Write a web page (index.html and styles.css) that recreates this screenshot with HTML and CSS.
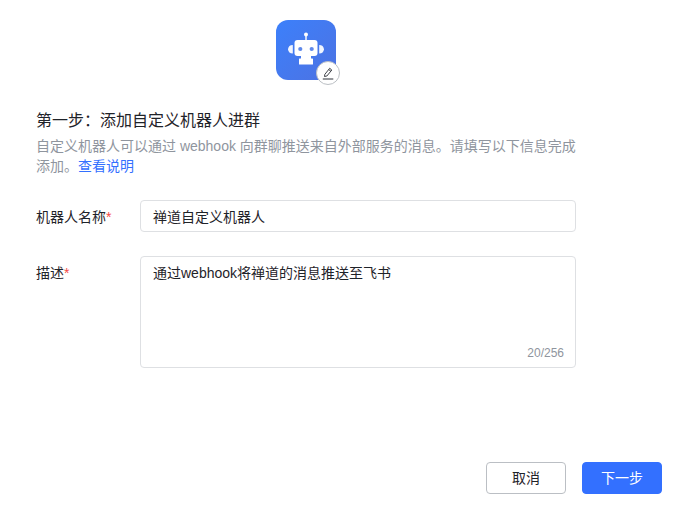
FILE: index.html
```html
<!DOCTYPE html>
<html lang="zh">
<head>
<meta charset="utf-8">
<title>添加自定义机器人</title>
<link rel="stylesheet" href="styles.css">
</head>
<body>
<div class="page">
  <div class="avatar-row">
    <div class="avatar">
      <svg class="robot" width="60" height="60" viewBox="0 0 60 60">
        <circle cx="30" cy="14.500" r="2" fill="#fff"/>
        <rect x="29.300" y="15" width="1.400" height="6" fill="#fff"/>
        <path d="M16.800 25v8.500a4.800 4.800 0 0 1-4.800-4.250a4.800 4.800 0 0 1 4.800-4.250z" fill="#f1f5fe"/>
        <path d="M43.200 25v8.500a4.800 4.800 0 0 0 4.800-4.250a4.800 4.800 0 0 0-4.800-4.250z" fill="#f1f5fe"/>
        <rect x="18.500" y="20" width="23" height="16" rx="3" fill="#fff"/>
        <circle cx="24.300" cy="29" r="2.100" fill="#5f88ea"/>
        <circle cx="35.700" cy="29" r="2.100" fill="#5f88ea"/>
        <rect x="25" y="35" width="10" height="5" fill="#fff"/>
        <rect x="23" y="38.500" width="14" height="6" rx="0.500" fill="#fff"/>
      </svg>
      <span class="edit">
        <svg width="14" height="14" viewBox="0 0 14 14" fill="none" stroke="#2b2f36" stroke-width="0.900">
          <path d="M3.800 8.400 8.700 2.300 10.800 4 5.900 10 3.500 10.500z"/>
          <path d="M7.700 3.500 9.800 5.200"/>
          <path d="M1.800 13h10.500" stroke-width="1"/>
        </svg>
      </span>
    </div>
  </div>
  <h1 class="title">第一步：添加自定义机器人进群</h1>
  <p class="desc">自定义机器人可以通过 webhook 向群聊推送来自外部服务的消息。请填写以下信息完成添加。<a class="link">查看说明</a></p>
  <div class="form">
    <div class="field">
      <label class="label">机器人名称<i class="req">*</i></label>
      <div class="input">禅道自定义机器人</div>
    </div>
    <div class="field">
      <label class="label">描述<i class="req">*</i></label>
      <div class="input textarea">通过webhook将禅道的消息推送至飞书<span class="count">20/256</span></div>
    </div>
  </div>
  <div class="actions">
    <button class="btn">取消</button>
    <button class="btn primary">下一步</button>
  </div>
</div>
</body>
</html>
```
FILE: styles.css
```css
* { box-sizing: border-box; }
html, body { margin: 0; padding: 0; background: #fff; }
body {
  font-family: "Liberation Sans", "Noto Sans CJK SC", sans-serif;
  font-size: 14px;
  color: #1f2329;
}
.page { width: 673px; height: 507px; padding: 20px 11px 13px 36px; display: flex; flex-direction: column; }
.avatar-row { width: 540px; display: flex; justify-content: center; }
.avatar {
  position: relative;
  width: 60px;
  height: 60px;
  border-radius: 12px;
  background: linear-gradient(135deg, #3c80fb, #4d72e2);
}
.robot { display: block; }
.edit {
  position: absolute;
  right: -4px;
  bottom: -5px;
  width: 24px;
  height: 24px;
  border-radius: 50%;
  background: #fff;
  border: 1px solid #bbbfc4;
  display: flex;
  align-items: center;
  justify-content: center;
}
.title { margin: 29px 0 0; font-size: 16px; font-weight: 400; line-height: 24px; color: #1f2329; }
.desc { margin: 3px 0 0; width: 540px; font-size: 14px; line-height: 20px; color: #8f959e; }
.link { color: #3370ff; }
.form { margin-top: 24px; display: flex; flex-direction: column; gap: 24px; }
.field { display: flex; }
.label { width: 104px; height: 32px; flex: none; padding-top: 2px; line-height: 30px; color: #1f2329; }
.req { font-style: normal; color: #f54a45; }
.input {
  position: relative;
  width: 436px;
  height: 32px;
  padding: 1px 12px 0;
  line-height: 30px;
  border: 1px solid #dee0e3;
  border-radius: 4px;
  color: #1f2329;
}
.textarea { height: 112px; }
.count { position: absolute; right: 11px; bottom: 6px; font-size: 12px; line-height: 16px; color: #8f959e; }
.actions { margin-top: auto; display: flex; justify-content: flex-end; gap: 16px; }
.btn {
  width: 80px;
  height: 32px;
  padding: 0 0 2px;
  border: 1px solid #bbbfc4;
  border-radius: 4px;
  background: #fff;
  color: #1f2329;
  font: inherit;
}
.primary { background: #3370ff; border-color: #3370ff; color: #fff; }
```
